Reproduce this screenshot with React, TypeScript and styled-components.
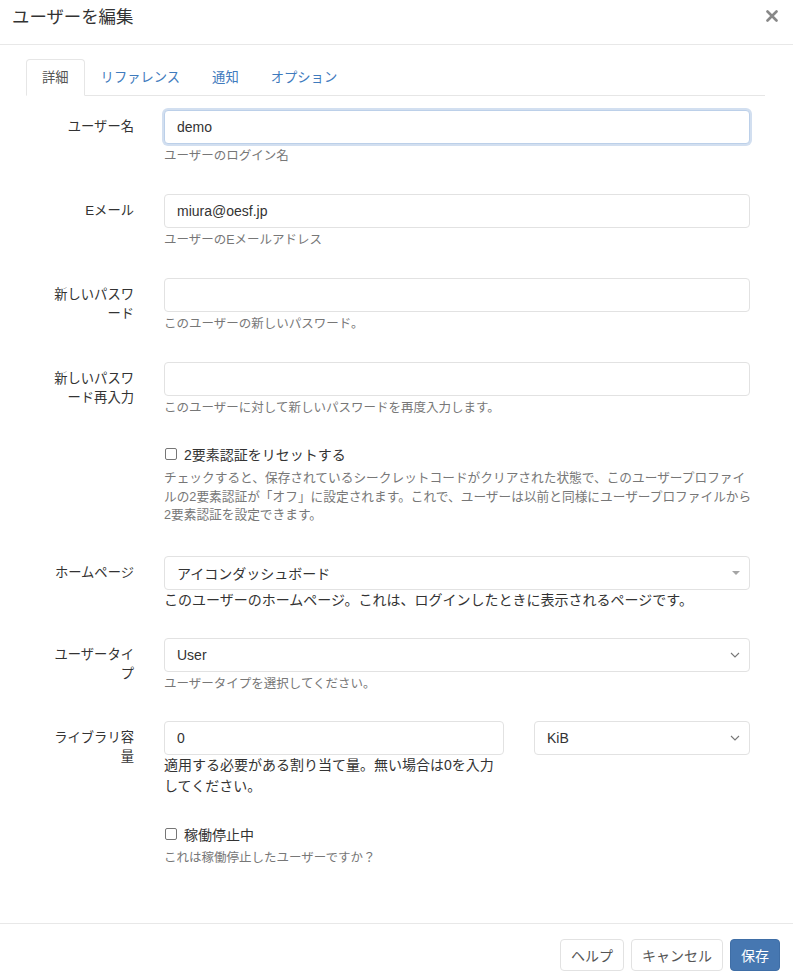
import styled, { createGlobalStyle } from "styled-components";

const GlobalStyle = createGlobalStyle`
    html, body {
        margin: 0;
        padding: 0;
        background: #fff;
    }
    body {
        font-family: "Liberation Sans", "Noto Sans CJK JP", sans-serif;
        color: #333;
    }
`

const tabs = ["詳細", "リファレンス", "通知", "オプション"];

const twoFactorHelp = [
    "チェックすると、保存されているシークレットコードがクリアされた状態で、このユーザープロファイ",
    "ルの2要素認証が「オフ」に設定されます。これで、ユーザーは以前と同様にユーザープロファイルから",
    "2要素認証を設定できます。",
];

function ChevronIcon() {
    return (
        <svg width="10" height="6" viewBox="0 0 10 6">
            <path d="M1 1 L5 5 L9 1" fill="none" stroke="#777" strokeWidth="1.1" />
        </svg>
    )
}

function CaretIcon() {
    return (
        <svg width="8" height="4" viewBox="0 0 8 4">
            <polygon points="0,0 8,0 4,4" fill="#a5a5a5" />
        </svg>
    )
}

function App() {
    return (
        <>
            <GlobalStyle />
            <Modal>
                <Header>
                    <Title>ユーザーを編集</Title>
                    <CloseButton aria-label="close">
                        <svg width="12" height="12" viewBox="0 0 12 12">
                            <path d="M1.5 1.5 L10.5 10.5 M10.5 1.5 L1.5 10.5" stroke="#888" strokeWidth="2.6" strokeLinecap="round" />
                        </svg>
                    </CloseButton>
                </Header>
                <Body>
                    <TabBar>
                        {tabs.map((tab, i) => (
                            <Tab key={tab} $active={i === 0}>{tab}</Tab>
                        ))}
                    </TabBar>

                    <FormRow $gap={29}>
                        <Label>ユーザー名</Label>
                        <Control>
                            <TextInput $focused defaultValue="demo" />
                            <HelpBlock>ユーザーのログイン名</HelpBlock>
                        </Control>
                    </FormRow>

                    <FormRow $gap={29}>
                        <Label>Eメール</Label>
                        <Control>
                            <TextInput defaultValue="miura@oesf.jp" />
                            <HelpBlock>ユーザーのEメールアドレス</HelpBlock>
                        </Control>
                    </FormRow>

                    <FormRow $gap={29}>
                        <Label>新しいパスワード</Label>
                        <Control>
                            <TextInput type="password" />
                            <HelpBlock>このユーザーの新しいパスワード。</HelpBlock>
                        </Control>
                    </FormRow>

                    <FormRow $gap={27}>
                        <Label>新しいパスワード再入力</Label>
                        <Control>
                            <TextInput type="password" />
                            <HelpBlock>このユーザーに対して新しいパスワードを再度入力します。</HelpBlock>
                        </Control>
                    </FormRow>

                    <FormRow $gap={31}>
                        <span />
                        <Control>
                            <CheckLabel>
                                <Checkbox type="checkbox" />
                                <span>2要素認証をリセットする</span>
                            </CheckLabel>
                            <CheckHelp>
                                {twoFactorHelp.map((line) => (
                                    <HelpLine key={line}>{line}</HelpLine>
                                ))}
                            </CheckHelp>
                        </Control>
                    </FormRow>

                    <FormRow>
                        <Label>ホームページ</Label>
                        <Control>
                            <SelectBox>
                                <span>アイコンダッシュボード</span>
                                <CaretIcon />
                            </SelectBox>
                            <PlainHelp>このユーザーのホームページ。これは、ログインしたときに表示されるページです。</PlainHelp>
                        </Control>
                    </FormRow>

                    <FormRow>
                        <Label>ユーザータイプ</Label>
                        <Control>
                            <SelectBox>
                                <span>User</span>
                                <ChevronIcon />
                            </SelectBox>
                            <HelpBlock>ユーザータイプを選択してください。</HelpBlock>
                        </Control>
                    </FormRow>

                    <FormRow $gap={27}>
                        <Label>ライブラリ容量</Label>
                        <QuotaGrid>
                            <div>
                                <TextInput defaultValue="0" />
                                <QuotaHelp>適用する必要がある割り当て量。無い場合は0を入力してください。</QuotaHelp>
                            </div>
                            <SelectBox>
                                <span>KiB</span>
                                <ChevronIcon />
                            </SelectBox>
                        </QuotaGrid>
                    </FormRow>

                    <FormRow>
                        <span />
                        <Control>
                            <CheckLabel>
                                <Checkbox type="checkbox" />
                                <span>稼働停止中</span>
                            </CheckLabel>
                            <HelpBlock $top={6}>これは稼働停止したユーザーですか？</HelpBlock>
                        </Control>
                    </FormRow>
                </Body>
                <Footer>
                    <Button>ヘルプ</Button>
                    <Button>キャンセル</Button>
                    <Button $primary>保存</Button>
                </Footer>
            </Modal>
        </>
    )
}

export default App;

const Modal = styled.div`
    display: flex;
    flex-direction: column;
    width: 793px;
    height: 979px;
    box-sizing: border-box;
    overflow: hidden;
`

const Header = styled.div`
    display: flex;
    justify-content: space-between;
    align-items: flex-start;
    height: 44px;
    padding: 0 15px 0 12px;
    border-bottom: 1px solid #e8e8e8;
`

const Title = styled.h4`
    margin: 0;
    padding-top: 5px;
    font-size: 17.4px;
    line-height: 24px;
    font-weight: normal;
    color: #333;
`

const CloseButton = styled.button`
    margin-top: 10px;
    padding: 0;
    border: none;
    background: none;
    line-height: 0;
    cursor: pointer;
`

const Body = styled.div`
    flex: 1;
    padding: 0 28px 0 26px;
`

const TabBar = styled.div`
    display: flex;
    margin-top: 14px;
    margin-bottom: 14px;
    border-bottom: 1px solid #e6e6e6;
`

const Tab = styled.div<{ $active?: boolean }>`
    height: 35px;
    padding: 0 15px;
    margin-bottom: ${p => p.$active ? "-1px" : "0"};
    border: 1px solid ${p => p.$active ? "#e6e6e6" : "transparent"};
    border-bottom: ${p => p.$active ? "1px solid #fff" : "none"};
    border-radius: 4px 4px 0 0;
    background: ${p => p.$active ? "#fff" : "transparent"};
    font-size: 13.3px;
    line-height: 35px;
    color: ${p => p.$active ? "#555" : "#3f7bbd"};
    cursor: pointer;
`

const FormRow = styled.div<{ $gap?: number }>`
    display: grid;
    grid-template-columns: 108px 586px;
    column-gap: 30px;
    margin-bottom: ${p => p.$gap ?? 28}px;
`

const Label = styled.label`
    padding: 7px 0 0 20px;
    text-align: right;
    font-size: 13.3px;
    line-height: 19px;
    color: #333;
`

const Control = styled.div`
    min-width: 0;
`

const TextInput = styled.input<{ $focused?: boolean }>`
    display: block;
    width: 100%;
    height: 34px;
    box-sizing: border-box;
    padding: 0 12px;
    border: 1px solid ${p => p.$focused ? "#bcd0e9" : "#e2e2e2"};
    border-radius: 4px;
    box-shadow: ${p => p.$focused ? "0 0 0 2px #d2dff0" : "none"};
    font-family: "Liberation Sans", "Noto Sans CJK JP", sans-serif;
    font-size: 14px;
    color: #333;
    outline: none;
    background: #fff;
`

const HelpBlock = styled.div<{ $top?: number }>`
    margin-top: ${p => p.$top ?? 4}px;
    font-size: 12.5px;
    line-height: 17px;
    color: #777;
`

const CheckHelp = styled.div`
    margin-top: 5px;
    font-size: 12.7px;
    line-height: 18.5px;
    color: #777;
`

const HelpLine = styled.span`
    display: block;
    white-space: nowrap;
`

const PlainHelp = styled.div`
    font-size: 14px;
    line-height: 20px;
    color: #333;
`

const QuotaHelp = styled.div`
    width: 336px;
    font-size: 14px;
    line-height: 21px;
    color: #333;
`

const CheckLabel = styled.label`
    display: flex;
    align-items: center;
    gap: 7px;
    height: 20px;
    font-size: 14px;
    color: #333;
    cursor: pointer;
`

const Checkbox = styled.input`
    appearance: none;
    margin: 0 0 0 1px;
    width: 12px;
    height: 12px;
    border: 1px solid #767676;
    border-radius: 2px;
    background: #fff;
`

const SelectBox = styled.div`
    display: flex;
    align-items: center;
    justify-content: space-between;
    height: 34px;
    box-sizing: border-box;
    padding: 0 9px 0 12px;
    border: 1px solid #e2e2e2;
    border-radius: 4px;
    background: #fff;
    font-size: 14px;
    color: #333;
    cursor: pointer;
`

const QuotaGrid = styled.div`
    display: grid;
    grid-template-columns: 340px 216px;
    column-gap: 30px;
    align-items: start;
`

const Footer = styled.div`
    display: flex;
    justify-content: flex-end;
    gap: 7px;
    height: 56px;
    box-sizing: border-box;
    padding: 15px 13px 0 0;
    border-top: 1px solid #e8e8e8;
`

const Button = styled.button<{ $primary?: boolean }>`
    height: 32px;
    padding: 0 10px;
    border: 1px solid ${p => p.$primary ? "#3f6ea6" : "#e2e2e2"};
    border-radius: 4px;
    background: ${p => p.$primary ? "#4677b1" : "#fff"};
    color: ${p => p.$primary ? "#fff" : "#555"};
    font-family: "Liberation Sans", "Noto Sans CJK JP", sans-serif;
    font-size: 14px;
    cursor: pointer;
`
